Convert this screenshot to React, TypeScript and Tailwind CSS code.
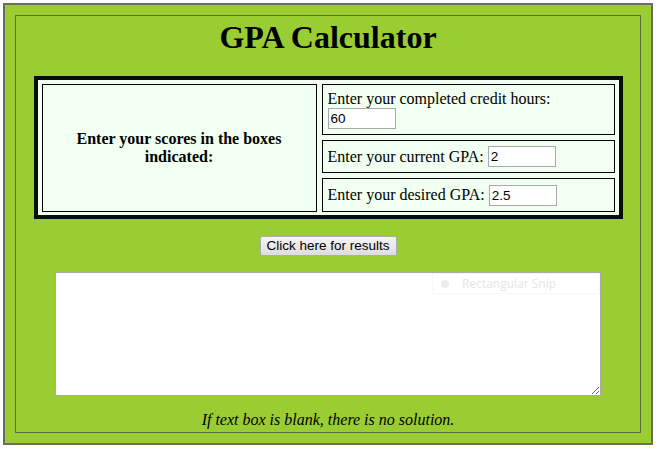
import React from 'react';

const serif = "font-['Liberation_Serif','Times_New_Roman',serif]";
const sans = "font-['Liberation_Sans',Arial,sans-serif]";

const Field: React.FC<{ value: string }> = ({ value }) => (
  <input
    type="text"
    defaultValue={value}
    className={`${sans} w-[68px] h-[21px] border border-[#a9a9a9] bg-white px-[2px] text-[13.5px] text-black outline-none`}
  />
);

export default function App() {
  return (
    <div className="w-[658px] h-[449px] bg-white pt-[3px] pl-[3px]">
      {/* outer frame */}
      <div className="w-[650px] h-[442px] border-[2px] border-[#6b6e5c] bg-[#9acd32] p-[10px]">
        {/* inner frame */}
        <div className={`${serif} h-full border border-[#5d6b3c] flex flex-col items-center text-black`}>
          <h1 className="mt-[3px] text-[32px] leading-[37px] font-bold">GPA Calculator</h1>

          {/* score table */}
          <div className="mt-[20px] w-[589px] border-[4px] border-[#050f05] bg-[#f0fff0] pt-[4px] pb-[3px] px-[4px] flex gap-[5px]">
            <div className="w-[275px] border border-black flex items-center justify-center text-center text-[16px] leading-[18px] font-bold">
              <span>
                Enter your scores in the boxes
                <br />
                indicated:
              </span>
            </div>

            <div className="w-[293px] flex flex-col gap-[5px] text-[16px]">
              <div className="h-[51px] border border-black px-[5px] pt-[5px] flex flex-col items-start">
                <span className="leading-[18px]">Enter your completed credit hours:</span>
                <Field value="60" />
              </div>
              <div className="h-[33px] border border-black px-[5px] flex items-center gap-[4px]">
                <span className="leading-[18px]">Enter your current GPA:</span>
                <Field value="2" />
              </div>
              <div className="h-[34px] border border-black px-[5px] flex items-center gap-[4px]">
                <span className="leading-[18px]">Enter your desired GPA:</span>
                <Field value="2.5" />
              </div>
            </div>
          </div>

          <button
            className={`${sans} mt-[17px] w-[137px] h-[20px] border border-[#acacac] rounded-[2px] bg-gradient-to-b from-[#f6f6f6] to-[#dddddd] text-[13.5px] leading-[18px] text-black`}
          >
            Click here for results
          </button>

          {/* results box */}
          <div className="relative mt-[16px] w-[546px] h-[124px]">
            <textarea
              readOnly
              className="block w-full h-full border border-[#a9a9a9] bg-white resize-y outline-none"
            />
            {/* faint snipping-tool ghost */}
            <div className="absolute top-[1px] right-[1px] w-[168px] h-[21px] border border-[#f7f7f7] flex items-center gap-[13px] pl-[8px] font-['Open_Sans',sans-serif] text-[12px] text-[#e6e6e6] pointer-events-none">
              <span className="w-[8px] h-[8px] rounded-full bg-[#ececec]" />
              <span>Rectangular Snip</span>
            </div>
          </div>

          <p className="mt-[15px] text-[16px] leading-[18px] italic">If text box is blank, there is no solution.</p>
        </div>
      </div>
    </div>
  );
}
